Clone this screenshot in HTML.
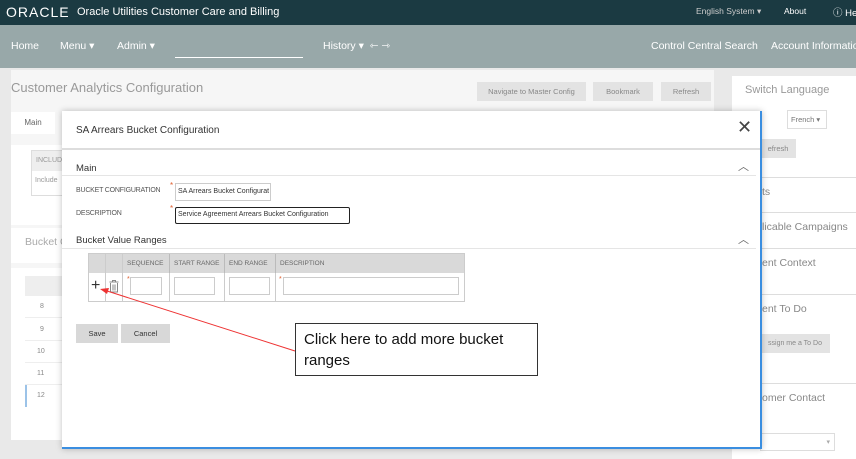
<!DOCTYPE html>
<html><head><style>
*{margin:0;padding:0;box-sizing:border-box;white-space:nowrap}
body{width:856px;height:459px;overflow:hidden;background:#e9e9e9;font-family:"Liberation Sans",sans-serif;position:relative;color:#333}
.a{position:absolute}
.hdr{left:0;top:0;width:856px;height:25px;background:#1b3a42;color:#fff;font-size:12px}
.nav{left:0;top:25px;width:856px;height:43px;background:#98a8a9;color:#fff;font-size:10.5px}
.btn{background:#e3e3e3;color:#888;font-size:7.5px;text-align:center;line-height:19px;height:19px;overflow:hidden}
.grey{color:#999}
.lbl{font-size:7px;color:#555;letter-spacing:-.2px}
.inp{border:1px solid #ccc;background:#fff;height:18px}
.th{background:#d9d9d9;font-size:6.5px;color:#666;line-height:19px;padding-left:4px;border-right:1px solid #bbb;overflow:hidden}
.rs{left:732px;width:124px;border-top:1px solid #ddd;font-size:10.5px;color:#888;overflow:hidden}
</style></head><body>
<div class="a hdr">
 <div class="a" style="left:6px;top:4px;font-size:14px;letter-spacing:1px">ORACLE</div>
 <div class="a" style="left:77px;top:6px;font-size:11px">Oracle Utilities Customer Care and Billing</div>
 <div class="a" style="left:696px;top:6px;font-size:8.5px;color:#ccc">English System ▾</div>
 <div class="a" style="left:784px;top:6px;font-size:8.5px">About</div>
 <div class="a" style="left:833px;top:5px;font-size:9.5px">ⓘ He</div>
</div>
<div class="a nav">
 <div class="a" style="left:11px;top:15px">Home</div>
 <div class="a" style="left:60px;top:15px">Menu ▾</div>
 <div class="a" style="left:117px;top:15px">Admin ▾</div>
 <div class="a" style="left:175px;top:32px;width:128px;border-top:1px solid #fff"></div>
 <div class="a" style="left:323px;top:15px">History ▾ &nbsp;⇽ ⇾</div>
 <div class="a" style="left:651px;top:15px">Control Central Search</div>
 <div class="a" style="left:771px;top:15px">Account Information</div>
</div>
<div class="a" style="left:11px;top:70px;width:703px;height:370px;background:#f6f6f6"></div>
<div class="a grey" style="left:11px;top:80px;font-size:13px">Customer Analytics Configuration</div>
<div class="a btn" style="left:477px;top:82px;width:109px">Navigate to Master Config</div>
<div class="a btn" style="left:593px;top:82px;width:60px">Bookmark</div>
<div class="a btn" style="left:661px;top:82px;width:50px">Refresh</div>
<div class="a" style="left:11px;top:112px;width:44px;height:22px;background:#fff;font-size:8px;color:#666;line-height:22px;text-align:center">Main</div>
<div class="a" style="left:11px;top:145px;width:60px;height:80px;background:#fff"></div>
<div class="a" style="left:31px;top:150px;width:40px;height:46px;border:1px solid #ddd;font-size:7px;color:#999;overflow:hidden"><div style="background:#eee;height:20px;line-height:20px;padding-left:4px">INCLUD</div><div style="padding:6px 3px">Include</div></div>
<div class="a" style="left:11px;top:228px;width:60px;height:35px;background:#fff;font-size:10.5px;color:#aaa;padding:8px 14px;overflow:hidden">Bucket C</div>
<div class="a" style="left:11px;top:268px;width:60px;height:172px;background:#fff"></div>
<div class="a" style="left:25px;top:276px;width:40px;height:146px;font-size:7px;color:#888">
 <div style="height:20px;background:#eee"></div>
 <div style="height:22px;line-height:22px;border-bottom:1px solid #eee;padding-left:15px">8</div>
 <div style="height:23px;line-height:23px;border-bottom:1px solid #eee;padding-left:15px">9</div>
 <div style="height:22px;line-height:22px;border-bottom:1px solid #eee;padding-left:12px">10</div>
 <div style="height:22px;line-height:22px;border-bottom:1px solid #eee;padding-left:12px">11</div>
 <div style="height:22px;line-height:22px;border-left:2px solid #9cc3e8;padding-left:10px">12</div>
</div>
<div class="a" style="left:732px;top:76px;width:124px;height:383px;background:#fff"></div>
<div class="a grey" style="left:745px;top:84px;font-size:11px">Switch Language</div>
<div class="a" style="left:787px;top:110px;width:40px;height:19px;border:1px solid #ddd;font-size:7.5px;color:#777;padding:4px 3px">French ▾</div>
<div class="a btn" style="left:760px;top:139px;width:36px">efresh</div>
<div class="a rs" style="top:177px;padding:8px 0 0 30px">ts</div>
<div class="a rs" style="top:212px;padding:8px 0 0 30px">licable Campaigns</div>
<div class="a rs" style="top:248px;padding:8px 0 0 30px">ent Context</div>
<div class="a rs" style="top:294px;padding:8px 0 0 30px">ent To Do</div>
<div class="a btn" style="left:760px;top:334px;width:70px;font-size:7px">ssign me a To Do</div>
<div class="a rs" style="top:383px;padding:8px 0 0 30px">omer Contact</div>
<div class="a" style="left:760px;top:433px;width:75px;height:18px;border:1px solid #ddd;font-size:7px;color:#aaa;text-align:right;padding:4px">▾</div>

<div class="a" style="left:62px;top:111px;width:700px;height:338px;background:#fff;border-right:2px solid #3a8ee0;border-bottom:2px solid #3a8ee0;box-shadow:0 0 6px rgba(0,0,0,.25)"></div>
<div class="a" style="left:62px;top:111px;width:698px;height:39px;border-bottom:2px solid #ddd"></div>
<div class="a" style="left:76px;top:125px;font-size:10px;color:#333">SA Arrears Bucket Configuration</div>
<div class="a" style="left:737px;top:117px;font-size:18px;color:#444">✕</div>
<div class="a" style="left:76px;top:163px;font-size:9.5px">Main</div>
<div class="a" style="left:738px;top:158px;font-size:11px;color:#666">︿</div>
<div class="a" style="left:62px;top:175px;width:694px;border-top:1px solid #e5e5e5"></div>
<div class="a lbl" style="left:76px;top:187px">BUCKET CONFIGURATION</div>
<div class="a" style="left:170px;top:181px;color:#e06030;font-size:8px">*</div>
<div class="a inp" style="left:175px;top:183px;width:96px;font-size:7px;padding:4px 2px;overflow:hidden">SA Arrears Bucket Configurat</div>
<div class="a lbl" style="left:76px;top:210px">DESCRIPTION</div>
<div class="a" style="left:170px;top:204px;color:#e06030;font-size:8px">*</div>
<div class="a" style="left:175px;top:207px;width:175px;height:17px;border:1.5px solid #222;border-radius:2px;font-size:7px;padding:3px 2px;overflow:hidden">Service Agreement Arrears Bucket Configuration</div>
<div class="a" style="left:76px;top:235px;font-size:9.5px">Bucket Value Ranges</div>
<div class="a" style="left:738px;top:231px;font-size:11px;color:#666">︿</div>
<div class="a" style="left:62px;top:248px;width:694px;border-top:1px solid #e5e5e5"></div>
<div class="a" style="left:88px;top:253px;width:377px;height:49px;border:1px solid #ccc"></div>
<div class="a" style="left:89px;top:254px;width:375px;height:19px;background:#d9d9d9"></div>
<div class="a th" style="left:89px;top:254px;width:17px;background:none"></div>
<div class="a th" style="left:106px;top:254px;width:17px;background:none"></div>
<div class="a th" style="left:123px;top:254px;width:47px">SEQUENCE</div>
<div class="a th" style="left:170px;top:254px;width:55px">START RANGE</div>
<div class="a th" style="left:225px;top:254px;width:51px">END RANGE</div>
<div class="a th" style="left:276px;top:254px;width:100px;border:none">DESCRIPTION</div>
<div class="a" style="left:105px;top:254px;height:47px;border-left:1px solid #ccc"></div>
<div class="a" style="left:122px;top:254px;height:47px;border-left:1px solid #ccc"></div>
<div class="a" style="left:169px;top:273px;height:28px;border-left:1px solid #ccc"></div>
<div class="a" style="left:224px;top:273px;height:28px;border-left:1px solid #ccc"></div>
<div class="a" style="left:275px;top:273px;height:28px;border-left:1px solid #ccc"></div>
<div class="a" style="left:91px;top:277px;font-size:16px;color:#333">+</div>
<svg class="a" style="left:108px;top:279px;width:12px;height:14px" width="12" height="14" viewBox="0 0 12 14"><path d="M1.5 3h9M4.5 3V1.5h3V3M2.5 4v9h7V4M5 5.5v6M7 5.5v6" fill="none" stroke="#888" stroke-width="1"/></svg>
<div class="a" style="left:127px;top:276px;color:#e06030;font-size:7px">*</div>
<div class="a inp" style="left:130px;top:277px;width:32px"></div>
<div class="a inp" style="left:174px;top:277px;width:41px"></div>
<div class="a inp" style="left:229px;top:277px;width:41px"></div>
<div class="a" style="left:279px;top:276px;color:#e06030;font-size:7px">*</div>
<div class="a inp" style="left:283px;top:277px;width:176px"></div>
<div class="a btn" style="left:76px;top:324px;width:42px;color:#333;background:#d8d8d8">Save</div>
<div class="a btn" style="left:121px;top:324px;width:49px;color:#333;background:#d8d8d8">Cancel</div>
<svg class="a" style="left:0;top:0" width="856" height="459"><line x1="295" y1="351" x2="104" y2="290" stroke="#e33" stroke-width="1"/><polygon points="100,289 109,288 107,294" fill="#e33"/></svg>
<div class="a" style="left:295px;top:323px;width:243px;height:53px;border:1px solid #333;background:#fff;font-size:15px;line-height:21px;padding:5px 8px;color:#111;white-space:normal">Click here to add more bucket ranges</div>
</body></html>
